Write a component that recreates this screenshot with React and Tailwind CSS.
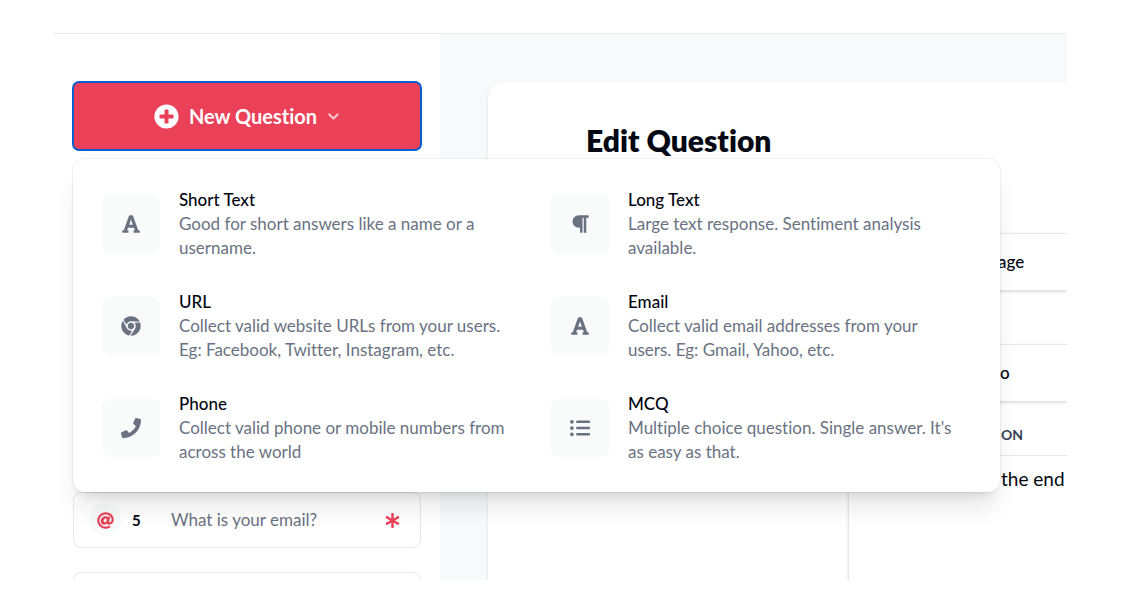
import {FaAsterisk, FaAt, FaChrome, FaFont, FaListUl, FaParagraph, FaPhone, FaPlusCircle} from "react-icons/fa";
import {HiChevronDown} from "react-icons/hi";


const questionTypes = [
    {icon: FaFont, title: "Short Text", description: "Good for short answers like a name or a username."},
    {icon: FaParagraph, title: "Long Text", description: "Large text response. Sentiment analysis available."},
    {icon: FaChrome, title: "URL", description: "Collect valid website URLs from your users. Eg: Facebook, Twitter, Instagram, etc."},
    {icon: FaFont, title: "Email", description: "Collect valid email addresses from your users. Eg: Gmail, Yahoo, etc."},
    {icon: FaPhone, title: "Phone", description: "Collect valid phone or mobile numbers from across the world"},
    {icon: FaListUl, title: "MCQ", description: "Multiple choice question. Single answer. It's as easy as that."},
];

// only the questions with a title are filled in, the others are still blank cards
const questions = [
    {id: 1},
    {id: 2},
    {id: 3},
    {id: 4},
    {id: 5, title: "What is your email?", required: true},
    {id: 6},
];


const QuestionTypeMenu = () => {
    return (
        <div className={'absolute left-0 top-full z-10 mt-[9px] grid w-[927px] grid-cols-2 gap-x-[29px] gap-y-[30px] rounded-xl bg-white px-[29px] pt-[29px] pb-7 shadow-xl ring-1 ring-black/5'}>
            {questionTypes.map(({icon: Icon, title, description}) => (
                <button key={title} type="button" className="flex items-center gap-[19px] text-left">
                    <span className="flex size-[58px] shrink-0 items-center justify-center rounded-lg bg-[#f9fbfb] text-gray-500">
                        <Icon className="size-5" />
                    </span>
                    <span className="min-w-0 pr-2 text-[17px] leading-6">
                        <span className="block font-medium text-gray-950">{title}</span>
                        <span className="block text-gray-500">{description}</span>
                    </span>
                </button>
            ))}
        </div>
    );
};


const QuestionCard = ({question}) => {
    return (
        <li className="flex h-14 shrink-0 items-center rounded-lg border border-gray-200 bg-white px-[15px]">
            {question.title && (
                <>
                    <span className="flex size-8 items-center justify-center rounded-full bg-[#f9fbfb] text-[#ea4058]">
                        <FaAt className="size-[17px]" />
                    </span>
                    <span className="w-[50px] pl-[11px] text-[15px] font-bold text-gray-950">{question.id}</span>
                    <span className="grow text-[17px] text-gray-500">{question.title}</span>
                    {question.required && <FaAsterisk className="mr-[5px] size-[15px] text-[#ea4058]" />}
                </>
            )}
        </li>
    );
};


const Sidebar = () => {
    return (
        <aside className="w-[386px] shrink-0 bg-white px-[19px] pt-12">
            <div className="relative">
                <button
                    type="button"
                    className="flex h-[68px] w-full items-center justify-center rounded-md bg-[#ea4058] text-[20px] font-bold text-white outline-2 -outline-offset-1 outline-[#0b5fcc]">
                    <FaPlusCircle className="size-[25px]" />
                    <span className="ml-[10px]">New Question</span>
                    <HiChevronDown className="-mr-1 ml-[6px] size-[21px] text-white/70" />
                </button>
                <QuestionTypeMenu />
            </div>
            <ul className="mt-[22px] flex flex-col gap-6">
                {questions.map((question) => <QuestionCard key={question.id} question={question} />)}
            </ul>
        </aside>
    );
};


const EditQuestion = () => {
    return (
        <section className="h-full rounded-tl-2xl bg-white pt-10 shadow">
            <h1 className="pl-[98px] text-[30px] leading-9 font-extrabold text-gray-950">Edit Question</h1>
            <div className="mt-[75px] ml-[360px] flex flex-col">
                <button type="button" className="h-[58px] border-y border-gray-200 pl-[150px] text-left text-[17px] font-medium text-gray-950 shadow-sm">age</button>
                <button type="button" className="mt-[53px] h-[58px] border-y border-gray-200 pl-[152px] text-left text-[17px] font-medium text-gray-950 shadow-sm">o</button>
            </div>
            <div className="ml-[360px] h-full border-l border-gray-200 shadow">
                <h2 className="h-[54px] border-b border-gray-200 pl-[152px] text-sm leading-[66px] font-bold text-gray-700">ON</h2>
                <p className="pl-[152px] text-[19px] leading-[46px] whitespace-nowrap text-gray-950">the end</p>
            </div>
        </section>
    );
};


const App = () => {
    return (
        <div className={'flex h-screen flex-col bg-white px-[54px] pb-[33px] font-[Lato,"Open_Sans",sans-serif] [font-variant-ligatures:none]'}>
            <div className="flex min-h-0 grow flex-col overflow-hidden">
                <header className="h-[34px] shrink-0 border-b border-gray-200" />
                <div className="flex min-h-0 grow">
                    <Sidebar />
                    <main className="min-w-0 grow bg-[#f8f9fb] pt-12 pl-12">
                        <EditQuestion />
                    </main>
                </div>
            </div>
        </div>
    );
};

export default App;
